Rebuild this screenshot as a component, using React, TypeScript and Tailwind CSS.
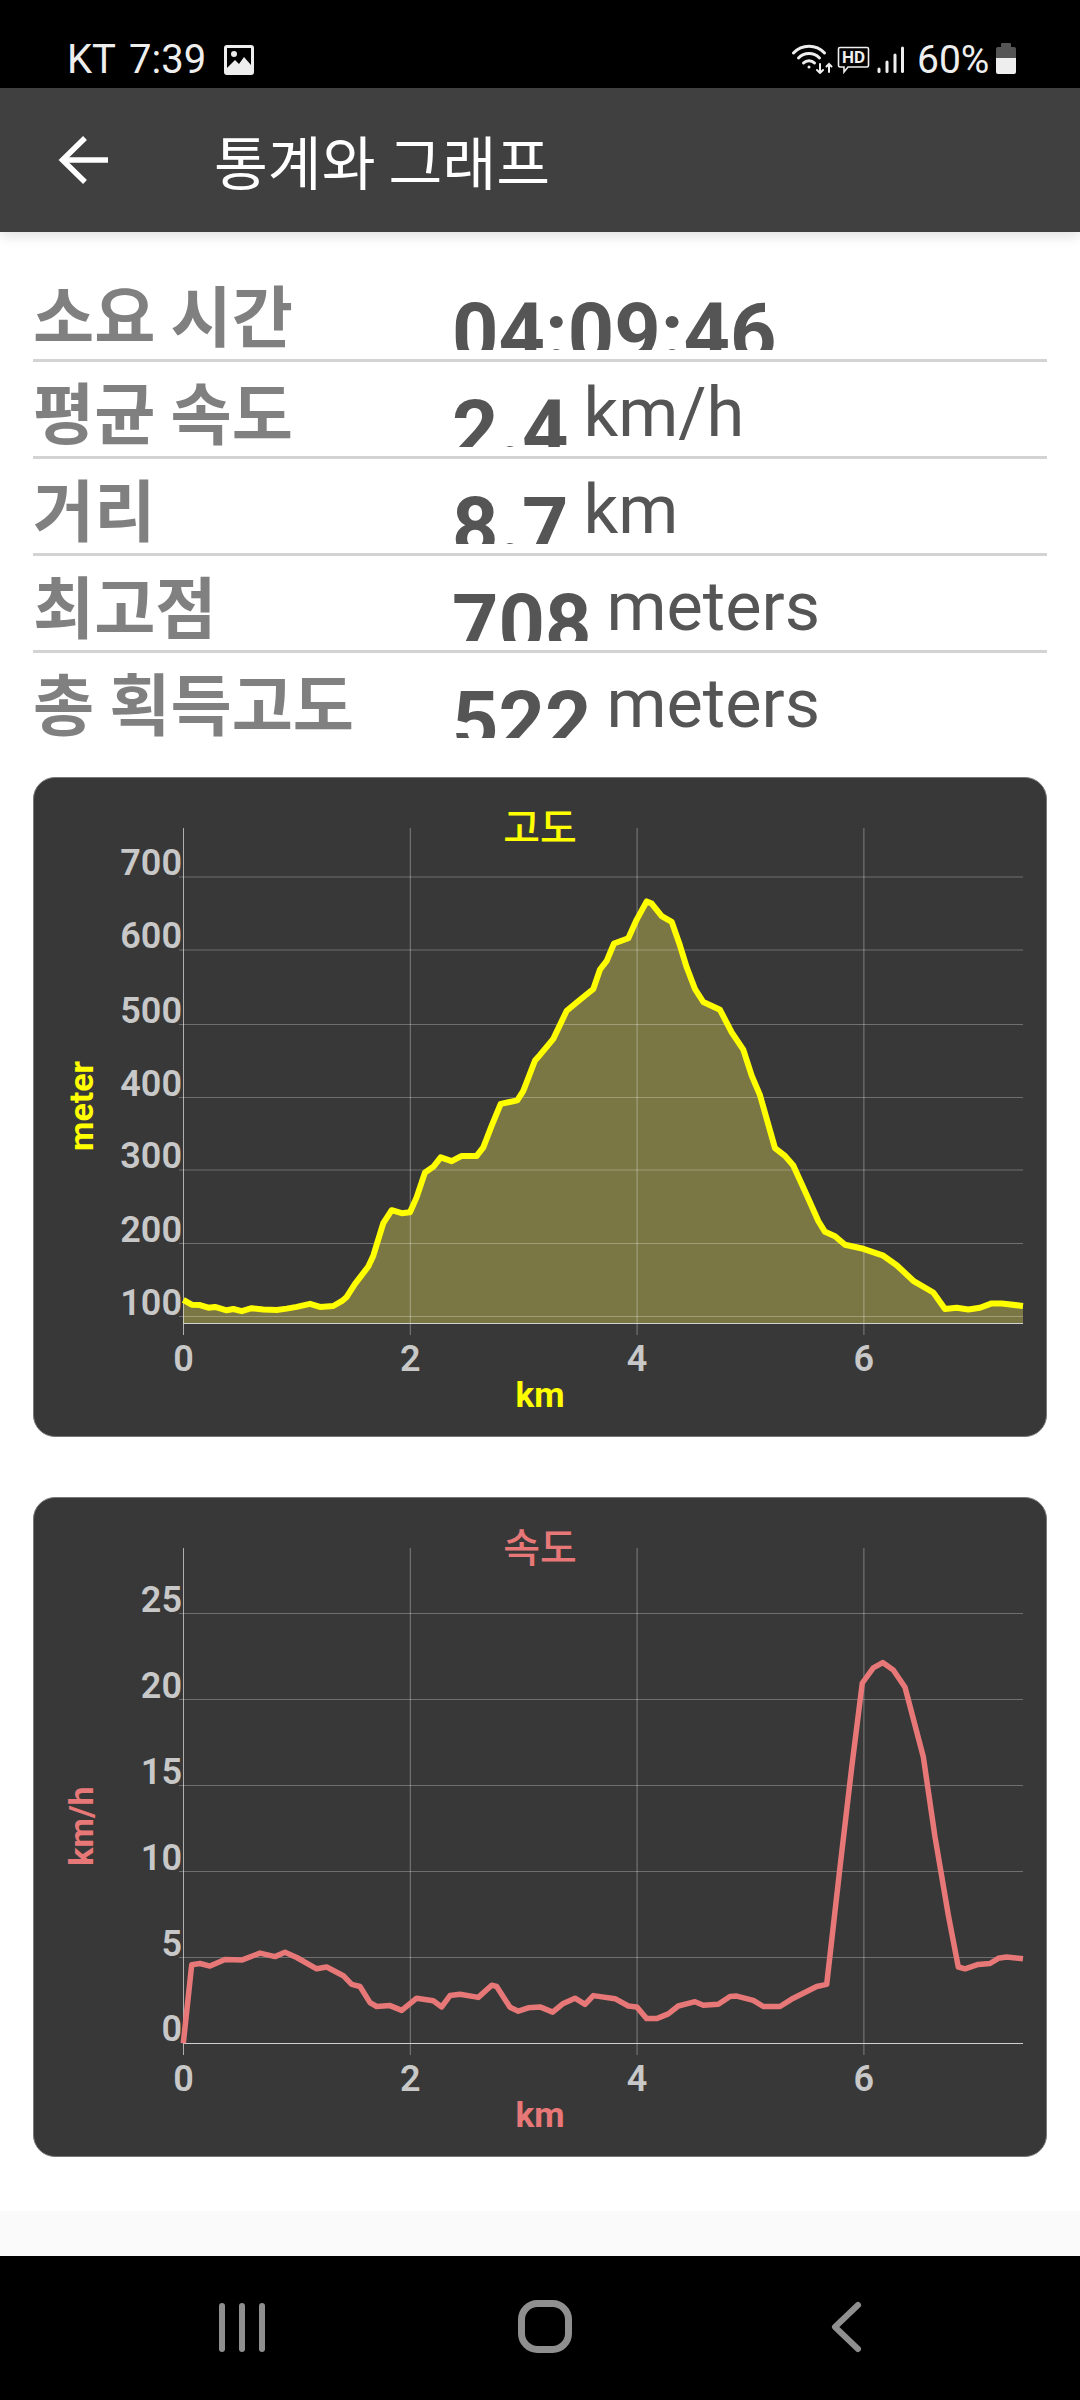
const elevationLeft = [[460,1222],[485,1233],[510,1234],[535,1240],[555,1238],[590,1246],[610,1243],[635,1248],[665,1241],[700,1244],[740,1245],[770,1242],[800,1238],[840,1231],[870,1238],[910,1236],[935,1225],[950,1215],[975,1185],[1015,1145],[1030,1120],[1060,1045],[1085,1015],[1115,1022],[1140,1020],[1160,985],[1185,928],[1210,915],[1232,893],[1265,902],[1295,890],[1340,890],[1360,870],[1385,820],[1412,770],[1462,762],[1480,740],[1515,670]];
const elevationRight = [[0,657],[40,620],[80,555],[120,530],[160,505],[180,460],[200,440],[222,400],[265,388],[290,345],[320,303],[335,308],[365,337],[395,350],[420,405],[440,455],[465,505],[490,535],[540,553],[575,605],[610,645],[635,705],[660,750],[705,872],[735,890],[760,912],[800,980],[835,1040],[855,1065],[885,1075],[915,1095],[970,1104],[1030,1120],[1070,1142],[1120,1178],[1180,1205],[1215,1243],[1250,1240],[1285,1244],[1320,1240],[1355,1230],[1385,1230],[1449,1236]];
const speedLeft = [[460,1276],[485,1095],[510,1092],[540,1098],[585,1083],[635,1084],[690,1068],[735,1076],[765,1066],[800,1078],[860,1104],[890,1100],[940,1120],[965,1140],[990,1145],[1020,1182],[1040,1191],[1080,1189],[1115,1200],[1160,1172],[1210,1178],[1235,1192],[1260,1166],[1290,1163],[1345,1170],[1385,1142],[1400,1145],[1440,1193],[1465,1202],[1495,1194]];
const speedRight = [[0,1192],[38,1204],[70,1184],[105,1172],[135,1186],[160,1166],[225,1173],[265,1190],[290,1192],[320,1219],[350,1219],[385,1208],[415,1190],[465,1180],[490,1188],[535,1186],[570,1168],[590,1167],[640,1177],[670,1191],[720,1191],[760,1172],[830,1145],[860,1140],[900,870],[935,640],[967,445],[1000,410],[1028,398],[1060,415],[1095,455],[1150,615],[1185,800],[1225,980],[1255,1100],[1275,1104],[1315,1094],[1350,1092],[1375,1080],[1400,1077],[1449,1081]];

const stats = [
  { label: "소요 시간", value: "04:09:46", unit: "" },
  { label: "평균 속도", value: "2.4", unit: "km/h" },
  { label: "거리", value: "8.7", unit: "km" },
  { label: "최고점", value: "708", unit: "meters" },
  { label: "총 획득고도", value: "522", unit: "meters" },
];

const axisLeft = 150;
const axisRight = 990;
const axisBottom = 546;
const axisTop = 51;

function toPath(left: number[][], right: number[][]) {
  const points = [
    ...left.map(([x, y]) => [x / 3 - 3, y / 2.306 - 7]),
    ...right.map(([x, y]) => [507 + x / 3, y / 2.306 - 7]),
  ];
  return points.map(([x, y]) => `${x.toFixed(1)},${y.toFixed(1)}`).join(" ");
}

type ChartProps = {
  title: string;
  yTitle: string;
  color: string;
  ticks: { label: string; y: number; noLine?: boolean }[];
  line: string;
  strokeWidth: number;
  filled?: boolean;
};

function Chart({ title, yTitle, color, ticks, line, strokeWidth, filled }: ChartProps) {
  return (
    <div className="h-[660px] rounded-[22px] border border-[#777] bg-[#383838] overflow-hidden">
      <svg width="1012" height="658" viewBox="1 1 1012 658" className="block font-['Roboto']">
        {filled && (
          <polygon points={`${line} ${axisRight},${axisBottom} ${axisLeft},${axisBottom}`} fill="#7a7745" />
        )}
        {ticks.map((t) => (
          <g key={t.label}>
            {!t.noLine && (
              <line x1={axisLeft - 4} x2={axisRight} y1={t.y} y2={t.y} stroke="#fff" strokeOpacity="0.28" />
            )}
            <text x={axisLeft - 1} y={t.y - 2} textAnchor="end" fontSize="36" fontWeight="600" fill="#c8c8c8">
              {t.label}
            </text>
          </g>
        ))}
        {[0, 2, 4, 6].map((km, i) => {
          const x = axisLeft + 0.5 + i * 226.8;
          return (
            <g key={km}>
              <line x1={x} x2={x} y1={axisTop} y2={axisBottom + 12} stroke="#fff" strokeOpacity={i === 0 ? 0.6 : 0.35} />
              <text x={x} y={594} textAnchor="middle" fontSize="36" fontWeight="600" fill="#c8c8c8">
                {km}
              </text>
            </g>
          );
        })}
        <line x1={axisLeft} x2={axisRight} y1={axisBottom + 0.5} y2={axisBottom + 0.5} stroke="#d0d0d0" />
        <polyline points={line} fill="none" stroke={color} strokeWidth={strokeWidth} strokeLinejoin="round" />
        <text
          x="507"
          y="65"
          textAnchor="middle"
          fontSize="40"
          fontWeight="500"
          fill={color}
          className="font-['Noto_Sans_CJK_KR']"
        >
          {title}
        </text>
        <text x="507" y="630" textAnchor="middle" fontSize="35" fontWeight="700" fill={color}>
          km
        </text>
        <text
          transform="translate(60 329) rotate(-90)"
          textAnchor="middle"
          fontSize="34"
          fontWeight="700"
          fill={color}
        >
          {yTitle}
        </text>
      </svg>
    </div>
  );
}

function StatusBar() {
  return (
    <div className="h-[88px] bg-black shrink-0 relative text-[#eeeeee] font-['Roboto']">
      <div className="flex items-center h-[88px] pl-[67px] pt-[31px] gap-[18px]">
        <span className="text-[40px] leading-[44px] [word-spacing:4px]">KT 7:39</span>
        <svg width="30" height="30" viewBox="0 0 30 30">
          <rect width="30" height="30" rx="3" fill="#eee" />
          <rect x="3" y="3" width="24" height="20" fill="#000" />
          <circle cx="10" cy="9" r="3" fill="#eee" />
          <path d="M3 23 L11 15 L15 19 L20 12 L27 20 L27 25 L3 25 Z" fill="#eee" />
        </svg>
      </div>
      <div className="absolute left-[792px] top-[43px] flex items-start">
        <svg width="41" height="31" viewBox="0 0 41 31" fill="none" stroke="#eee" strokeWidth="3" strokeLinecap="round">
          <path d="M1.5 10 C10 1 24 1 32.5 10" />
          <path d="M6.5 15 C12 9 22 9 27.5 15" />
          <path d="M11.5 20 C14.5 17 19.5 17 22.5 20" />
          <circle cx="17" cy="24" r="1.5" fill="#eee" stroke="none" />
          <path d="M28 21 V30 M25 27 L28 30 L31 27" strokeWidth="2" />
          <path d="M37 29 V21 M34.5 23.5 L37 21 L39.5 23.5" strokeWidth="2" />
        </svg>
      </div>
      <svg className="absolute left-[837px] top-[46px]" width="33" height="28" viewBox="0 0 33 28">
        <path d="M3 1.5 H30 Q31.5 1.5 31.5 3 V19 Q31.5 21 30 21 H11 L7 26 V21 H3 Q1.5 21 1.5 19 V3 Q1.5 1.5 3 1.5 Z" fill="none" stroke="#eee" strokeWidth="1.6" />
        <text x="16.5" y="17" textAnchor="middle" fontSize="17" fontWeight="700" fill="#eee">HD</text>
      </svg>
      <svg className="absolute left-[877px] top-[46px]" width="28" height="28" viewBox="0 0 28 28" stroke="#eee" strokeWidth="3" strokeLinecap="round">
        <line x1="2" y1="23" x2="2" y2="25.5" />
        <line x1="10" y1="16" x2="10" y2="25.5" />
        <line x1="18" y1="9" x2="18" y2="25.5" />
        <line x1="25.5" y1="2" x2="25.5" y2="25.5" />
      </svg>
      <span className="absolute left-[917px] top-[38px] text-[39px] leading-[44px]">60%</span>
      <div className="absolute left-[996px] top-[43px] w-[20px] h-[31px]">
        <div className="mx-auto w-[10px] h-[4px] bg-[#555] rounded-t-[1px]" />
        <div className="h-[11px] bg-[#555] rounded-t-[2px]" />
        <div className="h-[16px] bg-[#eee] rounded-b-[2px]" />
      </div>
    </div>
  );
}

function Header() {
  return (
    <div className="relative z-10 h-[144px] shrink-0 bg-[#404040] flex items-center shadow-[0_4px_12px_rgba(0,0,0,0.12)]">
      <svg className="ml-[58px]" width="52" height="50" viewBox="0 0 52 50" fill="none" stroke="#fff" strokeWidth="5.5">
        <path d="M50 25 H5" />
        <path d="M27 3 L4.5 25 L27 47" />
      </svg>
      <h1 className="ml-[104px] text-[58.5px] leading-none text-white font-['Noto_Sans_CJK_KR'] font-normal">통계와 그래프</h1>
    </div>
  );
}

function NavBar() {
  return (
    <div className="h-[144px] shrink-0 bg-black relative">
      <svg className="absolute left-0 top-0" width="1080" height="144" viewBox="0 0 1080 144" fill="none" stroke="#8f8f8f">
        <g strokeWidth="6" strokeLinecap="round">
          <line x1="222" x2="222" y1="50" y2="93" />
          <line x1="242" x2="242" y1="50" y2="93" />
          <line x1="262" x2="262" y1="50" y2="93" />
        </g>
        <rect x="521.5" y="47.5" width="47" height="46" rx="16" strokeWidth="7" />
        <path d="M858 49 L835 71 L858 93" strokeWidth="6" strokeLinecap="round" strokeLinejoin="round" />
      </svg>
    </div>
  );
}

export default function App() {
  const elevationTicks = [
    { label: "700", y: 100 },
    { label: "600", y: 173 },
    { label: "500", y: 247.5 },
    { label: "400", y: 320.5 },
    { label: "300", y: 393 },
    { label: "200", y: 466.5 },
    { label: "100", y: 539.5 },
  ];
  const speedTicks = [
    { label: "25", y: 116.5 },
    { label: "20", y: 202.5 },
    { label: "15", y: 288.5 },
    { label: "10", y: 374.5 },
    { label: "5", y: 460.5 },
    { label: "0", y: 546, noLine: true },
  ];

  return (
    <div className="w-[1080px] h-[2400px] flex flex-col bg-white overflow-hidden">
      <StatusBar />
      <Header />
      <div className="px-[33px] pt-[33px]">
        {stats.map((s, i) => (
          <div
            key={s.label}
            className={`flex h-[97px] ${i < 4 ? "border-b-[3px] border-[#d3d3d3]" : ""}`}
          >
            <div className="w-[419px] text-[66.5px] leading-[96px] text-[#808080] font-bold font-['Noto_Sans_CJK_KR'] whitespace-nowrap">
              {s.label}
            </div>
            <div className="relative flex-1 flex items-start font-['Roboto'] text-[#555555]">
              <div className="h-[85px] overflow-hidden pt-[29px] shrink-0">
                <span className="block text-[81px] leading-[80px] font-bold">{s.value}</span>
              </div>
              {s.unit && <span className="ml-[15px] text-[68.5px] leading-[101px]">{s.unit}</span>}
            </div>
          </div>
        ))}
      </div>
      <div className="px-[33px] mt-[27px] flex flex-col gap-[60px]">
        <Chart
          title="고도"
          yTitle="meter"
          color="#ffff00"
          ticks={elevationTicks}
          line={toPath(elevationLeft, elevationRight)}
          strokeWidth={6}
          filled
        />
        <Chart
          title="속도"
          yTitle="km/h"
          color="#e87878"
          ticks={speedTicks}
          line={toPath(speedLeft, speedRight)}
          strokeWidth={5.5}
        />
      </div>
      <div className="h-[45px] bg-[#fafafa] mt-auto shrink-0" />
      <NavBar />
    </div>
  );
}
